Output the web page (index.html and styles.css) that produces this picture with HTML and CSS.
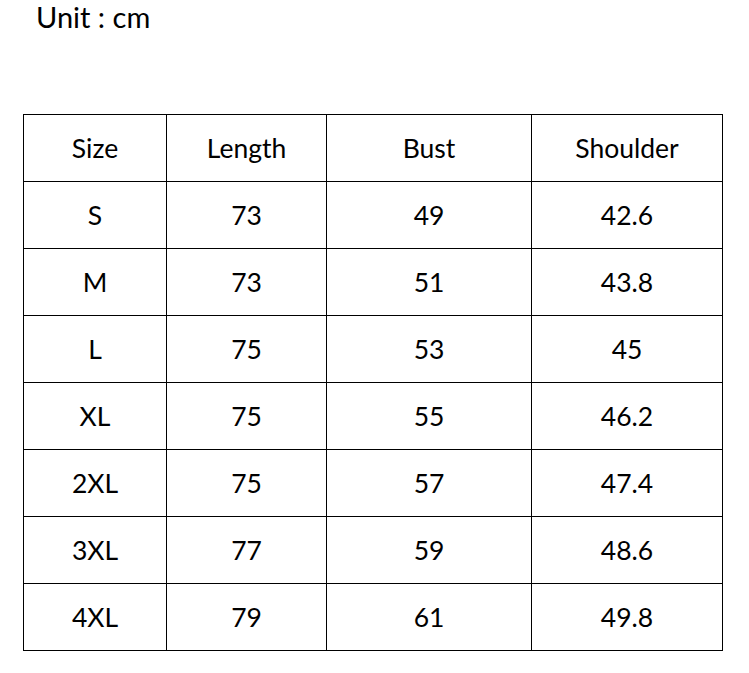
FILE: index.html
```html
<!DOCTYPE html>
<html>
<head>
<meta charset="utf-8">
<link rel="stylesheet" href="styles.css">
</head>
<body>
<div class="unit">Unit : cm</div>
<table class="sizes">
  <colgroup>
    <col class="c1"><col class="c2"><col class="c3"><col class="c4">
  </colgroup>
  <tr><td>Size</td><td>Length</td><td>Bust</td><td>Shoulder</td></tr>
  <tr><td>S</td><td>73</td><td>49</td><td>42.6</td></tr>
  <tr><td>M</td><td>73</td><td>51</td><td>43.8</td></tr>
  <tr><td>L</td><td>75</td><td>53</td><td>45</td></tr>
  <tr><td>XL</td><td>75</td><td>55</td><td>46.2</td></tr>
  <tr><td>2XL</td><td>75</td><td>57</td><td>47.4</td></tr>
  <tr><td>3XL</td><td>77</td><td>59</td><td>48.6</td></tr>
  <tr><td>4XL</td><td>79</td><td>61</td><td>49.8</td></tr>
</table>
</body>
</html>
```

FILE: styles.css
```css
html, body {
  margin: 0;
  padding: 0;
  background: #fff;
}
body {
  font-family: Lato, "Open Sans", sans-serif;
  color: #000;
  width: 749px;
  height: 673px;
  overflow: hidden;
}
.unit {
  font-size: 29px;
  line-height: 32px;
  padding-left: 36px;
  padding-top: 1px;
}
.sizes {
  margin-top: 81px;
  margin-left: 23px;
  border-collapse: collapse;
  table-layout: fixed;
  width: 699px;
  font-size: 26.5px;
}
.c1 { width: 143px; }
.c2 { width: 160px; }
.c3 { width: 205px; }
.c4 { width: 191px; }
.sizes td {
  border: 1px solid #000;
  height: 67px;
  padding: 0;
  text-align: center;
  vertical-align: middle;
  box-sizing: border-box;
}
```
